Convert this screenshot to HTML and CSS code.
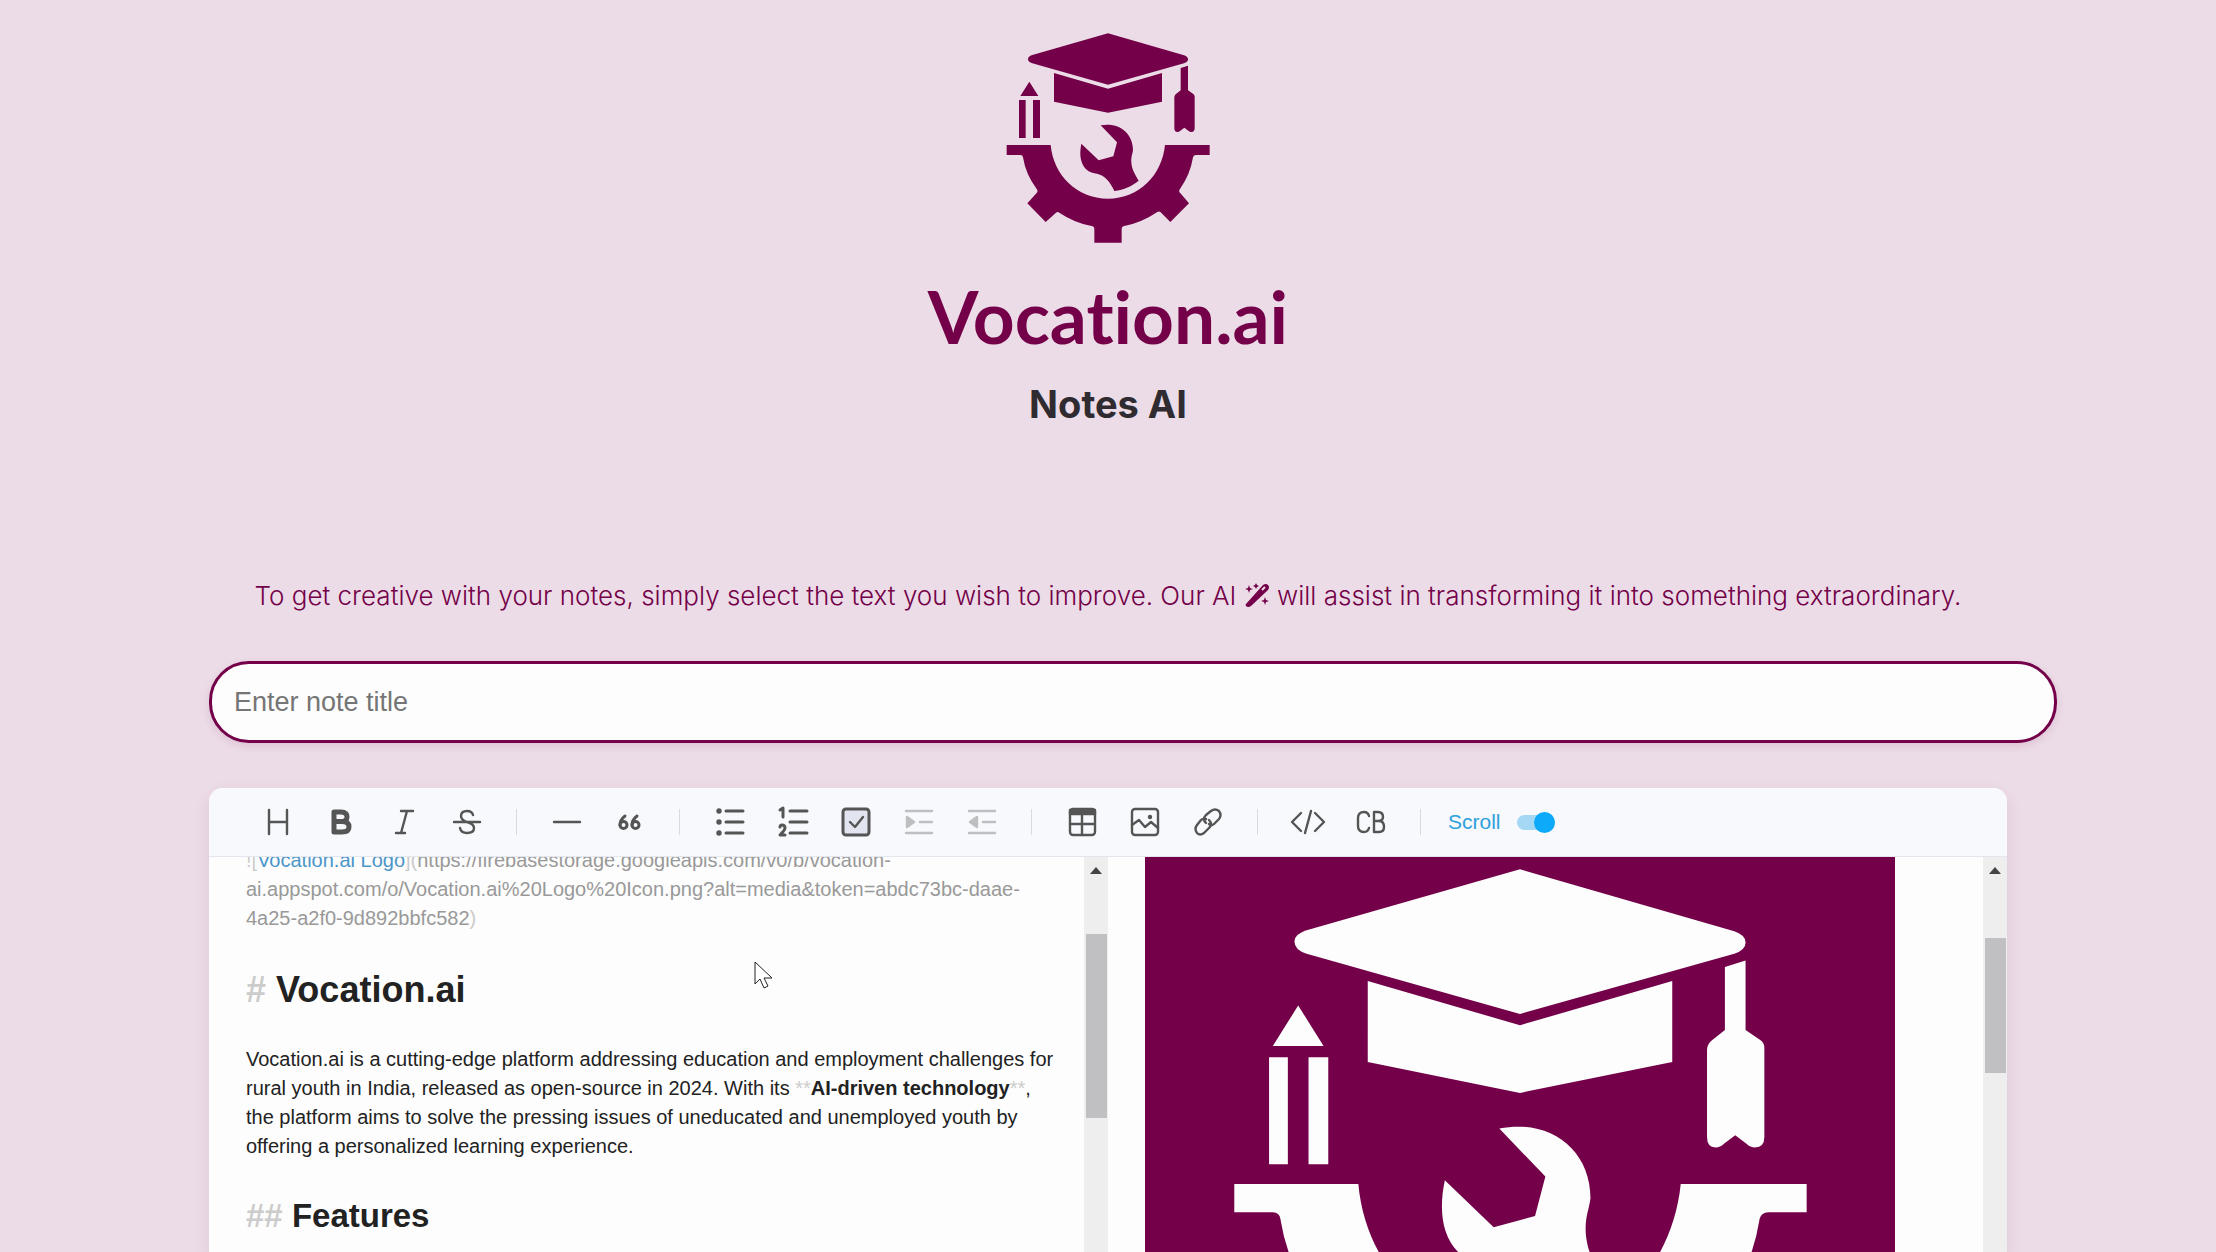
FILE: index.html
```
<!DOCTYPE html>
<html lang="en">
<head>
<meta charset="utf-8">
<title>Vocation.ai Notes AI</title>
<link rel="stylesheet" href="styles.css">
</head>
<body>
<svg class="sprite" aria-hidden="true">
  <symbol id="emblem" overflow="visible">
    <path d="M384 70L612 136Q624 140 624 148Q624 156 612 160L384 224L157 160Q144 156 144 147Q144 139 157 135Z"/>
    <path d="M222 189L384 236L546 189V275L384 308L222 275Z"/>
    <path d="M602 174L624 167V241L640 252Q644 255 644 260V355Q644 366 634 366Q629 366 625 362L613 353L601 362Q597 366 592 366Q583 366 583 355V262Q583 257 587 253L602 241Z"/>
    <path d="M148 215L175 258H121ZM117 270H137V384H117ZM159 270H180V384H159Z"/>
    <path d="M80 405H212C220 495 290 566 384 566S546 495 555 405H689V435H648Q641 435 639 442Q631 493 600 537Q595 543 600 548L627 580L571 636L542 607Q537 603 532 606Q485 638 430 649Q425 651 425 656V698H343V656Q343 651 338 649Q284 639 238 608Q233 604 228 608L197 636L142 580L170 549Q175 543 170 537Q137 493 129 442Q128 435 121 435H80Z"/>
    <path d="M362 346C415 335 459 368 459 420C457 434 453 440 454 458C456 478 462 488 476 512C455 529 432 539 403 543C393 520 379 501 360 494C348 490 338 491 326 484C301 466 297 435 304 401L356 451L400 439L411 397Z"/>
  </symbol>
</svg>

<header class="brand">
  <svg class="brand-emblem" viewBox="-6 0 780 750" role="img" aria-label="Vocation.ai emblem"><use href="#emblem"/></svg>
  <p class="brand-name">Vocation.ai</p>
  <h1 class="page-title">Notes AI</h1>
</header>

<main class="notes">
  <p class="hint">To get creative with your notes, simply select the text you wish to improve. Our AI
    <svg class="wand" viewBox="0 0 26 26" aria-hidden="true"><path d="M2 22L19 3Q22 1 24 3Q26 5 24 8L7 24Q4 26 2 24Q1 23 2 22Z"/><path class="wand-tip" d="M18 8L21 5"/><path d="M5 3l1 3 3 1-3 1-1 3-1-3-3-1 3-1zM12 1l1 2 2 1-2 1-1 2-1-2-2-1 2-1zM21 15l1 3 3 1-3 1-1 3-1-3-3-1 3-1z"/></svg>
    will assist in transforming it into something extraordinary.</p>

  <input class="title-input" type="text" placeholder="Enter note title" aria-label="Note title">

  <section class="editor" aria-label="Note editor">
    <div class="toolbar" role="toolbar" aria-label="Formatting">
      <button class="tool" aria-label="Headings"><svg viewBox="0 0 32 32"><path d="M7 4V28M25 4V28M7 16H25"/></svg></button>
      <button class="tool" aria-label="Bold"><svg viewBox="0 0 32 32"><path class="heavy" d="M9 6H16Q22 6 22 11Q22 15.500 16 15.500H9ZM9 15.500H17Q24 15.500 24 21Q24 26 17 26H9Z"/></svg></button>
      <button class="tool" aria-label="Italic"><svg viewBox="0 0 32 32"><path d="M13 5H25M8 27H17M19 5L13 27"/></svg></button>
      <button class="tool" aria-label="Strike"><svg viewBox="0 0 32 32"><path d="M3 16H29M22 9Q21 5 16 5Q10 5 10 10Q10 14 16 16Q23 18 23 22Q23 27 16 27Q10 27 9 22"/></svg></button>
      <span class="divider"></span>
      <button class="tool" aria-label="Line"><svg viewBox="0 0 32 32"><path d="M3 16H29"/></svg></button>
      <button class="tool" aria-label="Blockquote"><svg viewBox="0 0 32 32"><path class="bold" d="M11 10Q6 14 6 19M23 10Q18 14 18 19"/><circle class="bold" cx="9.500" cy="19" r="3.500"/><circle class="bold" cx="21.500" cy="19" r="3.500"/></svg></button>
      <span class="divider"></span>
      <button class="tool" aria-label="Unordered list"><svg viewBox="0 0 32 32"><path class="bold" d="M12 5H29M12 16H29M12 27H29"/><g class="solid"><circle cx="5" cy="5" r="1.500"/><circle cx="5" cy="16" r="1.500"/><circle cx="5" cy="27" r="1.500"/></g></svg></button>
      <button class="tool" aria-label="Ordered list"><svg viewBox="0 0 32 32"><path class="bold" d="M13 5H30M13 16H30M13 27H30M3 4L6 2V11M3 21Q3 19 5 19Q8 19 8 22Q8 24 3 29H8"/></svg></button>
      <button class="tool" aria-label="Task"><svg viewBox="0 0 32 32"><rect class="tint bold" x="3" y="3" width="26" height="26" rx="3"/><path d="M10 16L15 21L23 11"/></svg></button>
      <button class="tool" aria-label="Indent" disabled><svg viewBox="0 0 32 32"><path d="M3 5H29M17 16H29M3 27H29"/><path class="solid" d="M4 11L11 16L4 21Z"/></svg></button>
      <button class="tool" aria-label="Outdent" disabled><svg viewBox="0 0 32 32"><path d="M3 5H29M17 16H29M3 27H29"/><path class="solid" d="M11 11L4 16L11 21Z"/></svg></button>
      <span class="divider"></span>
      <button class="tool" aria-label="Insert table"><svg viewBox="0 0 32 32"><rect x="4" y="3" width="25" height="26" rx="3"/><path class="solid" d="M4 4H29V8H4Z"/><path d="M4 18H29M16 9V29"/></svg></button>
      <button class="tool" aria-label="Insert image"><svg viewBox="0 0 32 32"><rect x="3" y="3" width="26" height="26" rx="3"/><path d="M3 19L10 14L16 21L22 16L29 22"/><circle class="solid" cx="21" cy="11" r="1"/></svg></button>
      <button class="tool" aria-label="Insert link"><svg viewBox="0 0 32 32"><path d="M14 17Q10 13 14 9L19 5Q23 2 27 5Q30 9 27 13L22 18Q20 20 17 18M17 14Q21 18 17 22L12 27Q8 30 5 27Q2 23 5 19L9 14Q11 12 14 13"/></svg></button>
      <span class="divider"></span>
      <button class="tool" aria-label="Inline code"><svg viewBox="0 0 32 32"><path d="M9 7L0 16L9 25M23 7L32 16L23 25M19 5L13 27"/></svg></button>
      <button class="tool" aria-label="Insert code block"><svg viewBox="0 0 32 32"><path d="M14 10Q13 6 9 6Q3 6 3 12V20Q3 26 9 26Q13 26 14 22M19 6H23Q28 6 28 11Q28 15 23 15H19ZM19 15H24Q29 15 29 21Q29 26 24 26H19Z"/></svg></button>
      <span class="divider"></span>
      <label class="scroll-sync">Scroll <input type="checkbox" role="switch" checked></label>
    </div>

    <div class="panes">
      <div class="pane">
        <div class="source">
          <p class="url"><span class="mark">![</span><a href="#logo">Vocation.ai Logo</a><span class="mark">](</span>https://firebasestorage.googleapis.com/v0/b/vocation-<br>ai.appspot.com/o/Vocation.ai%20Logo%20Icon.png?alt=media&amp;token=abdc73bc-daae-<br>4a25-a2f0-9d892bbfc582<span class="mark">)</span></p>
          <h2 class="source-h1"><span class="mark">#</span> Vocation.ai</h2>
          <p>Vocation.ai is a cutting-edge platform addressing education and employment challenges for<br>rural youth in India, released as open-source in 2024. With its <span class="mark">**</span><strong>AI-driven technology</strong><span class="mark">**</span>,<br>the platform aims to solve the pressing issues of uneducated and unemployed youth by<br>offering a personalized learning experience.</p>
          <h3 class="source-h2"><span class="mark">##</span> Features</h3>
        </div>
        <div class="scrollbar"><span class="arrow"></span><span class="thumb thumb-source"></span></div>
      </div>
      <div class="pane">
        <div class="preview" id="logo">
          <svg class="preview-logo" viewBox="-15 57 798 700" role="img" aria-label="Vocation.ai Logo"><use href="#emblem"/></svg>
        </div>
        <div class="scrollbar"><span class="arrow"></span><span class="thumb thumb-preview"></span></div>
      </div>
    </div>
  </section>
</main>

<svg class="pointer" viewBox="0 0 20 28" aria-hidden="true"><path d="M1 1V23L6 18L10 27L14 25L10 17H18Z"/></svg>
</body>
</html>
```
FILE: styles.css
```
* { box-sizing: border-box; }

body {
  margin: 0;
  height: 100vh;
  overflow: hidden;
  display: flex;
  flex-direction: column;
  background: #ecdce7;
  color: #222;
  font-family: "Liberation Sans", Arial, sans-serif;
}

h1, h2, h3, p { margin: 0; }

.sprite { position: absolute; width: 0; height: 0; }

.brand {
  display: flex;
  flex-direction: column;
  align-items: center;
  padding-top: 10px;
}
.brand-emblem { width: 260px; height: 250px; fill: #730048; }
.brand-name {
  margin-top: 16px;
  color: #730048;
  font: 700 73px/80px Lato, sans-serif;
  font-variant-ligatures: none;
}
.page-title {
  margin-top: 24px;
  color: #2f2b30;
  font: 700 38px/48px Inter, sans-serif;
}

.notes {
  flex: 1;
  min-height: 0;
  display: flex;
  flex-direction: column;
  margin: 148px 209px 0;
}
.hint {
  align-self: center;
  color: #730048;
  white-space: nowrap;
  font: 300 26px/40px Inter, sans-serif;
}
.wand {
  width: 26px;
  height: 26px;
  vertical-align: -3px;
  fill: #730048;
}
.wand-tip { stroke: #ecdce7; stroke-width: 2; }

.title-input {
  flex: none;
  width: calc(100% + 50px);
  height: 82px;
  margin-top: 45px;
  padding: 0 22px;
  border: 3px solid #730048;
  border-radius: 40px;
  background: #fdfdfd;
  box-shadow: 0 3px 8px rgba(115, 0, 72, .12);
  font: 27px "Liberation Sans", Arial, sans-serif;
}
.title-input::placeholder { color: #757575; }

.editor {
  flex: 1;
  min-height: 0;
  display: flex;
  flex-direction: column;
  margin-top: 45px;
  border-radius: 14px 14px 0 0;
  overflow: hidden;
  background: #fdfdfd;
  box-shadow: 0 6px 16px rgba(115, 0, 72, .1);
}
.toolbar {
  flex: none;
  display: flex;
  align-items: center;
  gap: 18px;
  height: 69px;
  padding: 0 46px;
  border-bottom: 1px solid #e3e6ec;
  background: #f7f9fc;
}
.tool {
  display: grid;
  place-items: center;
  width: 45px;
  height: 45px;
  padding: 0;
  border: 0;
  background: none;
}
.tool svg {
  width: 32px;
  height: 32px;
  overflow: visible;
  fill: none;
  stroke: #555;
  stroke-width: 2.4;
  stroke-linecap: round;
  stroke-linejoin: round;
}
.tool .bold { stroke-width: 3; }
.tool .heavy { stroke-width: 5; }
.tool .solid { fill: #555; }
.tool .tint { fill: #e2e4ef; }
.tool:disabled { opacity: .35; }
.divider { width: 1px; height: 26px; margin: 0 9px; background: #d9dbe0; }
.scroll-sync {
  display: flex;
  align-items: center;
  gap: 16px;
  color: #2ea0dc;
  font-size: 21px;
}
.scroll-sync input {
  appearance: none;
  display: flex;
  justify-content: flex-end;
  align-items: center;
  width: 38px;
  height: 15px;
  margin: 0;
  border-radius: 8px;
  background: #a5d8f5;
}
.scroll-sync input::before {
  content: "";
  width: 21px;
  height: 21px;
  border-radius: 50%;
  background: #0caaf8;
}

.panes {
  flex: 1;
  min-height: 0;
  display: grid;
  grid-template-columns: 1fr 1fr;
}
.pane {
  min-width: 0;
  overflow: hidden;
  display: grid;
  grid-template-columns: minmax(0, 1fr) 24px;
}
.source {
  margin-top: -11px;
  padding-left: 37px;
  white-space: nowrap;
  font-size: 20px;
  line-height: 29px;
}
.source a { color: #4b96c8; text-decoration: none; }
.url { color: #999; }
.mark { color: #ccc; }
.source-h1 { margin: 32px 0 30px; font-size: 36px; line-height: 50px; }
.source-h2 { margin: 32px 0; font-size: 33px; line-height: 46px; }

.preview { padding: 0 88px 0 37px; }
.preview-logo { display: block; width: 100%; background: #730048; fill: #fdfdfd; }

.scrollbar {
  display: flex;
  flex-direction: column;
  align-items: center;
  padding-top: 10px;
  background: #eeeeef;
}
.arrow {
  border: 6px solid transparent;
  border-top: 0;
  border-bottom: 7px solid #444;
}
.thumb { width: 21px; background: #c0c0c2; }
.thumb-source { height: 184px; margin-top: 60px; }
.thumb-preview { height: 135px; margin-top: 64px; }

.pointer {
  position: absolute;
  left: 754px;
  top: 961px;
  width: 20px;
  height: 28px;
  fill: #fff;
  stroke: #222;
}
```
